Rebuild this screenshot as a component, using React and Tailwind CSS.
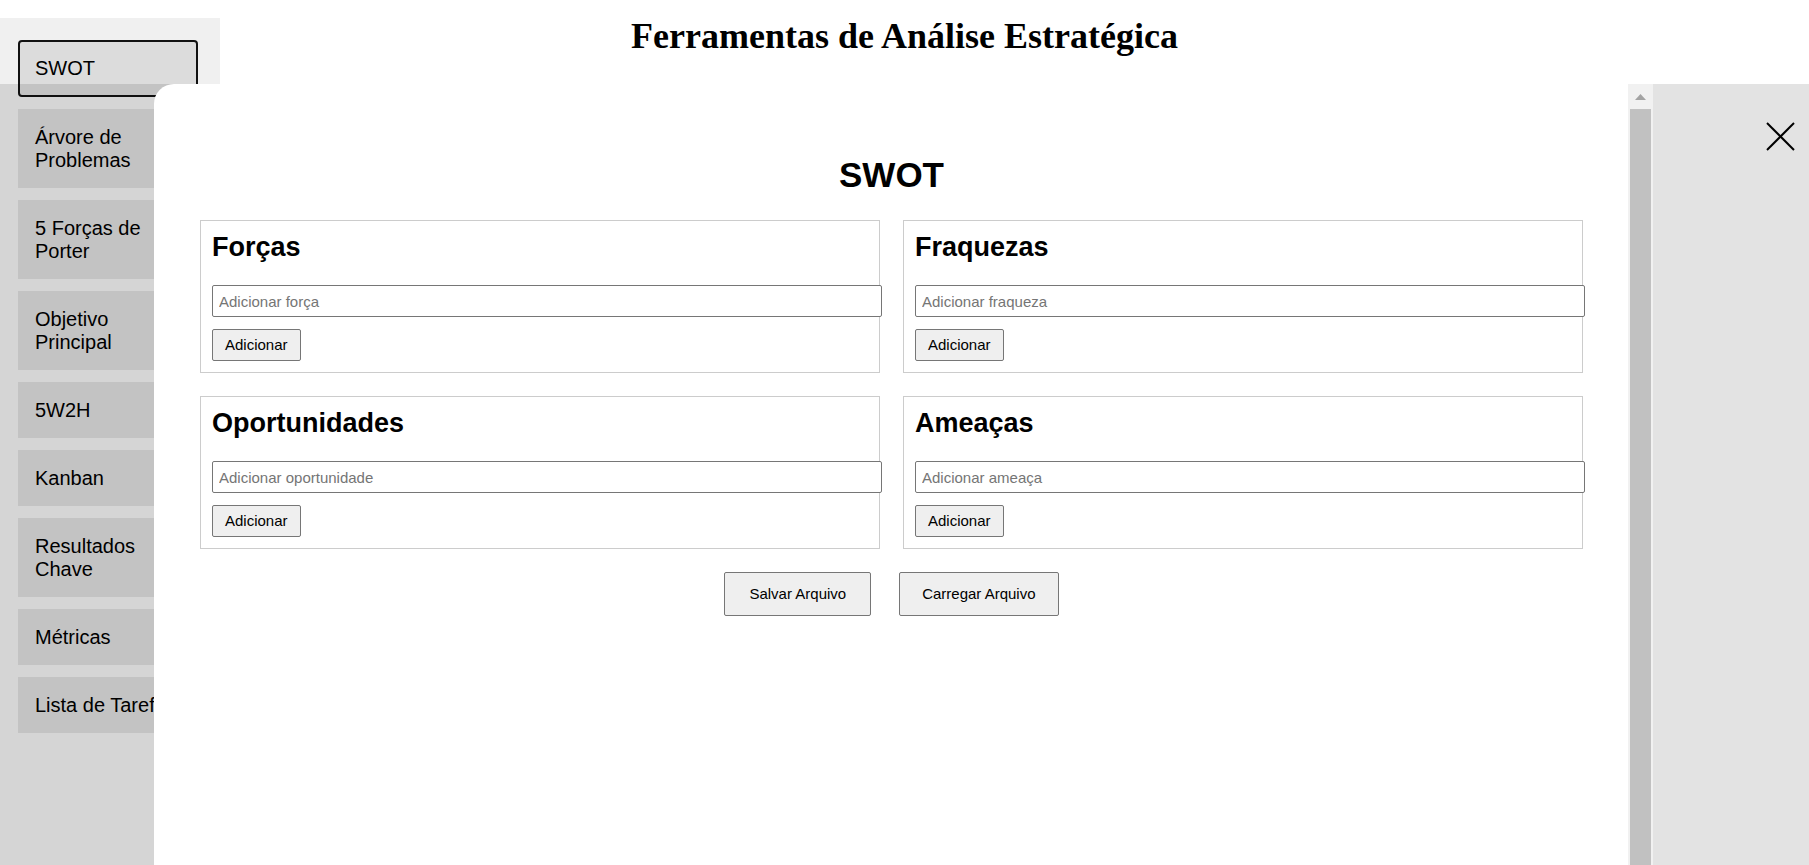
import React from 'react';

const tools = [
  'SWOT',
  'Árvore de Problemas',
  '5 Forças de Porter',
  'Objetivo Principal',
  '5W2H',
  'Kanban',
  'Resultados Chave',
  'Métricas',
  'Lista de Tarefas',
];

const quadrants = [
  { title: 'Forças', placeholder: 'Adicionar força' },
  { title: 'Fraquezas', placeholder: 'Adicionar fraqueza' },
  { title: 'Oportunidades', placeholder: 'Adicionar oportunidade' },
  { title: 'Ameaças', placeholder: 'Adicionar ameaça' },
];

const Quadrant = ({ title, placeholder }) => (
  <div className="border border-[#cccccc] p-[11px]">
    <h3 className="text-[27px] leading-[31px] font-bold mb-[22px]">{title}</h3>
    <input
      type="text"
      placeholder={placeholder}
      className="block box-content w-full h-[30px] px-[6px] border border-[#767676] rounded-[2px] text-[15px] bg-white placeholder:text-[#757575] outline-none"
    />
    <button
      type="button"
      className="block mt-[12px] h-[32px] px-3 border border-[#767676] rounded-[2px] bg-[#efefef] text-[15px] text-black"
    >
      Adicionar
    </button>
  </div>
);

const Scrollbar = () => (
  <div className="w-[25px] shrink-0 bg-[#f1f1f1] flex flex-col">
    <div className="h-[25px] flex items-center justify-center">
      <svg width="11" height="6" viewBox="0 0 11 6">
        <polygon points="0,6 5.5,0 11,6" fill="#a3a3a3" />
      </svg>
    </div>
    <div className="flex-1 mx-[2px] bg-[#c1c1c1]" />
  </div>
);

export default function App() {
  const active = 'SWOT';

  return (
    <div className="relative h-[865px] w-full overflow-hidden bg-white text-black font-['Liberation_Sans',Arial,sans-serif]">
      <div className="grid grid-cols-[220px_1fr_220px] h-full pt-[18px]">
        <aside className="bg-[#f0f0f0] flex flex-col gap-3 pt-[22px] pl-[18px]">
          {tools.map((name) => (
            <button
              key={name}
              type="button"
              className={`w-[180px] text-left text-[20px] leading-[23px] bg-[#dcdcdc] ${
                name === active
                  ? 'border-2 border-[#111111] rounded-[4px] px-[15px] py-[15px]'
                  : 'border border-[#dcdcdc] px-[16px] py-[15.5px]'
              }`}
            >
              {name}
            </button>
          ))}
        </aside>
        <h1 className="text-center text-[36px] leading-[36px] font-bold font-['Liberation_Serif','Times_New_Roman',serif] whitespace-nowrap">
          Ferramentas de Análise Estratégica
        </h1>
        <div />
      </div>

      {/* backdrop + modal */}
      <div className="absolute inset-x-0 top-[84px] bottom-0 bg-[rgba(0,0,0,0.11)] flex pl-[154px]">
        <div className="w-[1499px] shrink-0 h-full bg-white rounded-tl-[20px] flex overflow-hidden">
          <div className="w-[1474px] shrink-0 pt-[71px] pl-[46px] pr-[45px]">
            <h2 className="text-center text-[35px] leading-[40px] font-bold mb-[25px]">SWOT</h2>
            <div className="grid grid-cols-2 gap-[23px]">
              {quadrants.map((q) => (
                <Quadrant key={q.title} {...q} />
              ))}
            </div>
            <div className="flex justify-center gap-[28px] mt-[23px]">
              <button
                type="button"
                className="h-[44px] px-6 border border-[#767676] rounded-[2px] bg-[#efefef] text-[15px]"
              >
                Salvar Arquivo
              </button>
              <button
                type="button"
                className="h-[44px] px-[22px] border border-[#767676] rounded-[2px] bg-[#efefef] text-[15px]"
              >
                Carregar Arquivo
              </button>
            </div>
          </div>
          <Scrollbar />
        </div>
        <div className="flex-1 flex justify-end items-start pt-[38px] pr-[14px]">
          <svg width="29" height="29" viewBox="0 0 29 29">
            <line x1="1" y1="1" x2="28" y2="28" stroke="#000" strokeWidth="2" />
            <line x1="28" y1="1" x2="1" y2="28" stroke="#000" strokeWidth="2" />
          </svg>
        </div>
      </div>
    </div>
  );
}
